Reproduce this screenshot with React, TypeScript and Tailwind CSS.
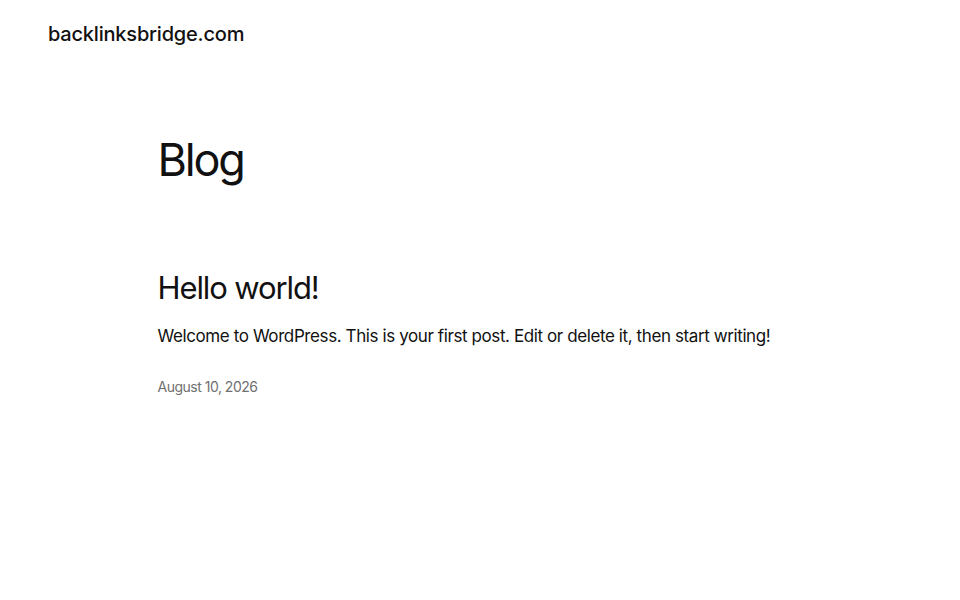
export default function App() {
  return (
    <div className="min-h-[600px] bg-white text-[#111111] font-['Inter',sans-serif]">
      <header className="px-12 pt-[21px]">
        <a className="text-[20px] font-medium leading-[26px] tracking-[-0.2px]">backlinksbridge.com</a>
      </header>
      <main className="mx-auto w-[645px] pt-[85px]">
        <h1 className="text-[45px] font-normal leading-[56px] tracking-[-2.2px]">Blog</h1>
        <article className="pt-[80px]">
          <h2 className="text-[31px] font-normal leading-[40px] tracking-[-1.1px]">Hello world!</h2>
          <p className="mt-[15px] text-[17px] leading-[26px] tracking-[-0.4px]">
            Welcome to WordPress. This is your first post. Edit or delete it, then start writing!
          </p>
          <time className="mt-[28px] block text-[14px] leading-[20px] text-[#707070] tracking-[-0.5px]">August 10, 2026</time>
        </article>
      </main>
    </div>
  );
}
